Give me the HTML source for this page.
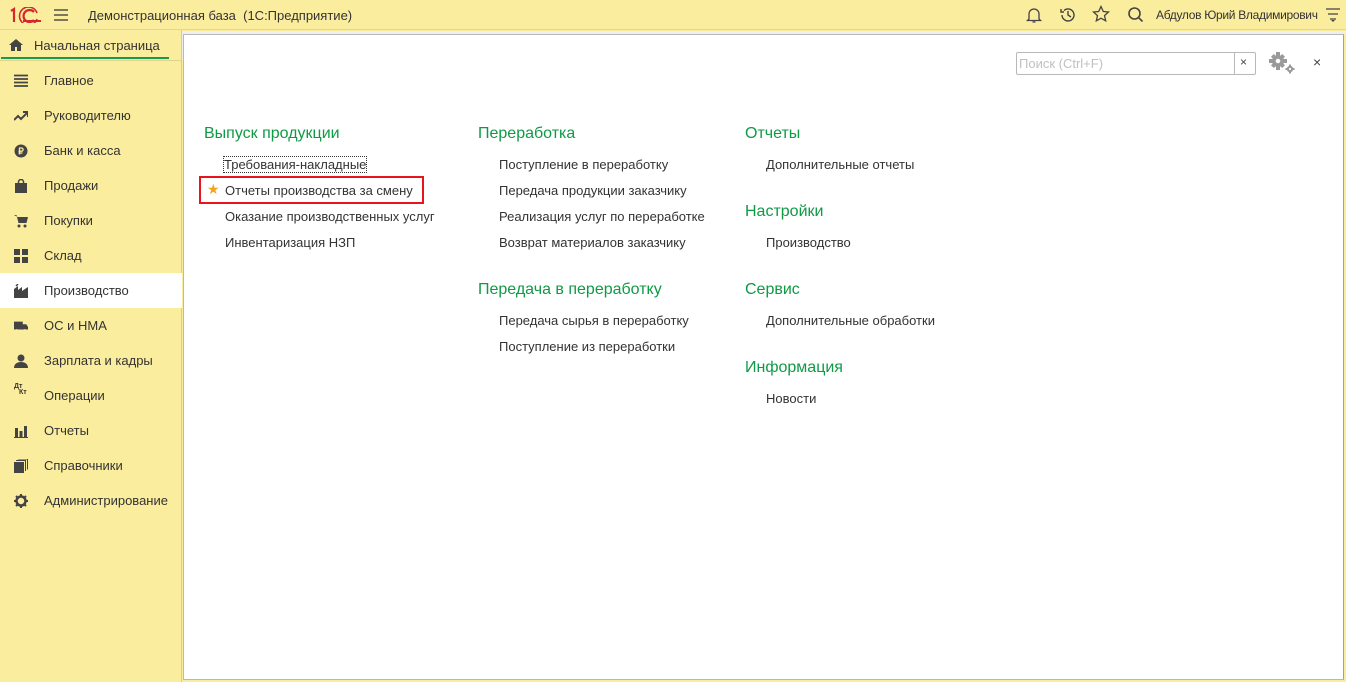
<!DOCTYPE html>
<html><head><meta charset="utf-8"><style>
*{margin:0;padding:0;box-sizing:border-box}
body{width:1346px;height:682px;overflow:hidden;font-family:"Liberation Sans",Arial,sans-serif;font-size:13px;color:#333;background:#fbed9e;position:relative}
.top{position:absolute;left:0;top:0;width:1346px;height:30px;background:#fbed9e;border-bottom:1px solid #e4d68e}
.abs{position:absolute;white-space:nowrap}
.side{position:absolute;left:0;top:30px;width:182px;height:652px;background:#fbed9e;border-right:1px solid #c9c9c9}
.tab{position:absolute;left:0;top:30px;width:172px;height:30px;background:#fbed9e}
.tab .ln{position:absolute;left:1px;right:3px;bottom:1px;height:2px;background:#1a9b4b}
.item{position:absolute;left:0;width:182px;height:35px;line-height:35px;padding-left:44px;font-size:13px}
.item .ic{position:absolute;left:14px;top:11px;width:14px;height:14px}
.main{position:absolute;left:183px;top:34px;width:1161px;height:646px;background:#fff;border:1px solid #b8b8b8;border-right:1px solid #a0a0a0}
.h{position:absolute;color:#0f9a45;font-size:16px;white-space:nowrap}
.l{position:absolute;font-size:13px;white-space:nowrap;color:#333}
</style></head><body>
<div class="top"></div>
<div class="abs" style="left:173px;top:31px;width:10px;height:29px;background:#efefef"></div>
<div class="abs" style="left:183px;top:31px;width:1163px;height:3px;background:#efefef"></div>
<svg class="abs" style="left:10px;top:7px" width="32" height="16"><path d="M1 4l3-2v13" stroke="#d7262c" stroke-width="2.2" fill="none"/><path d="M24 5a6 6 0 1 0 0 8" stroke="#d7262c" stroke-width="2.2" fill="none"/><path d="M27 6a9 9 0 1 0 0 6" stroke="#d7262c" stroke-width="1.6" fill="none"/><path d="M13 14h18" stroke="#d7262c" stroke-width="2"/></svg>
<svg class="abs" style="left:54px;top:9px" width="14" height="12"><path d="M0 1H14M0 6H14M0 11H14" stroke="#333" stroke-width="1.3"/></svg>
<div class="abs" style="left:88px;top:8px;font-size:13px">Демонстрационная база&nbsp; (1С:Предприятие)</div>
<svg class="abs" style="left:1025px;top:6px" width="18" height="18" fill="none" stroke="#444" stroke-width="1.3"><path d="M4 13V8a5 5 0 0 1 10 0v5l1.5 1.5h-13zM7.5 16h3"/></svg>
<svg class="abs" style="left:1059px;top:6px" width="18" height="18" fill="none" stroke="#444" stroke-width="1.4"><path d="M3 9a6 6 0 1 0 2-4.5M2 3v3h3M9 5v4l3 2"/></svg>
<svg class="abs" style="left:1092px;top:5px" width="18" height="18" fill="none" stroke="#444" stroke-width="1.3"><path d="M9 1.5l2.3 5 5.2.5-4 3.6 1.2 5.2L9 13.2 4.3 15.8l1.2-5.2-4-3.6 5.2-.5z"/></svg>
<svg class="abs" style="left:1127px;top:6px" width="18" height="18" fill="none" stroke="#444" stroke-width="1.6"><circle cx="7.5" cy="7.5" r="5.5"/><path d="M11.5 11.5l4 4"/></svg>
<div class="abs" style="left:1156px;top:8px;font-size:12px;letter-spacing:-0.3px">Абдулов Юрий Владимирович</div>
<svg class="abs" style="left:1326px;top:8px" width="14" height="14"><path d="M0 1H14M2 6H12M4 11H10" stroke="#444" stroke-width="1.3"/><path d="M5 12l2 2 2-2" fill="#444"/></svg>
<div class="side"></div>
<div class="tab"><svg class="abs" style="left:9px;top:9px" width="14" height="12"><path d="M7 0L0 6h2v6h4V8h2v4h4V6h2z" fill="#444"/></svg><span class="abs" style="left:34px;top:8px">Начальная страница</span><div class="ln"></div></div>
<div style="position:absolute;left:0;top:60px;width:182px;height:1px;background:#e0d390"></div>
<div class="item" style="top:63px"><svg class="ic" viewBox="0 0 14 14"><path d="M0 1.5H14M0 5H14M0 8.5H14M0 12H14" stroke="#444" stroke-width="1.8"/></svg>Главное</div>
<div class="item" style="top:98px"><svg class="ic" viewBox="0 0 14 14"><path d="M0 11l4-4 3 3 6-6M9 3h5v5" fill="none" stroke="#444" stroke-width="2"/></svg>Руководителю</div>
<div class="item" style="top:133px"><svg class="ic" viewBox="0 0 14 14"><circle cx="7" cy="7" r="6.5" fill="#444"/><path d="M5.5 3.5v7M5.5 4h2a1.6 1.6 0 0 1 0 3.2h-3M4.5 9h4" stroke="#fbed9e" stroke-width="1.3" fill="none"/></svg>Банк и касса</div>
<div class="item" style="top:168px"><svg class="ic" viewBox="0 0 14 14"><path d="M1 4h12v10H1z" fill="#444"/><path d="M4.5 5V3a2.5 2.5 0 0 1 5 0v2" stroke="#444" stroke-width="1.5" fill="none"/></svg>Продажи</div>
<div class="item" style="top:203px"><svg class="ic" viewBox="0 0 14 14"><path d="M0 1h2.5l2 8h8l1.5-6H3.5" fill="#444"/><circle cx="5" cy="12" r="1.5" fill="#444"/><circle cx="11" cy="12" r="1.5" fill="#444"/></svg>Покупки</div>
<div class="item" style="top:238px"><svg class="ic" viewBox="0 0 14 14"><path d="M0 0h6v6H0zM8 0h6v6H8zM0 8h6v6H0zM8 8h6v6H8z" fill="#444"/></svg>Склад</div>
<div class="item" style="top:273px;background:#fff"><svg class="ic" viewBox="0 0 14 14"><path d="M0 14V5l4-3v4l4-3v4l6-4v11z" fill="#444"/><path d="M2 2l2-2" stroke="#444" stroke-width="1.5"/></svg>Производство</div>
<div class="item" style="top:308px"><svg class="ic" viewBox="0 0 16 14"><path d="M0 2h10v9H0zM10 5h4l2 3v3h-6z" fill="#444"/><circle cx="3" cy="12" r="1.5" fill="#fbed9e"/><circle cx="12.5" cy="12" r="1.5" fill="#fbed9e"/></svg>ОС и НМА</div>
<div class="item" style="top:343px"><svg class="ic" viewBox="0 0 14 14"><circle cx="7" cy="4" r="3.5" fill="#444"/><path d="M0 14c0-4 3-6 7-6s7 2 7 6z" fill="#444"/></svg>Зарплата и кадры</div>
<div class="item" style="top:378px"><span style="position:absolute;left:14px;top:-9px;font-size:7px;font-weight:bold">Дт</span><span style="position:absolute;left:19px;top:-3px;font-size:7px;font-weight:bold">Кт</span>Операции</div>
<div class="item" style="top:413px"><svg class="ic" viewBox="0 0 14 14"><path d="M1 4h3v9H1zM5.5 7h3v6h-3zM10 2h3v11h-3zM0 13h14v1H0z" fill="#444"/></svg>Отчеты</div>
<div class="item" style="top:448px"><svg class="ic" viewBox="0 0 14 14"><path d="M0 3h10v11H0z" fill="#444"/><path d="M2 1.5h9.5V12M4 0h9.5v10.5" stroke="#444" fill="none"/></svg>Справочники</div>
<div class="item" style="top:483px"><svg class="ic" viewBox="0 0 14 14"><circle cx="7" cy="7" r="4.5" fill="none" stroke="#444" stroke-width="2.5"/><path d="M7 0v3M7 11v3M0 7h3M11 7h3M2 2l2 2M10 10l2 2M12 2l-2 2M2 12l2-2" stroke="#444" stroke-width="2"/></svg>Администрирование</div>

<div class="main"></div>
<div class="abs" style="left:1016px;top:52px;width:240px;height:23px;border:1px solid #b8b8b8;border-radius:2px;background:#fff"></div>
<div class="abs" style="left:1234px;top:52px;width:1px;height:23px;background:#b8b8b8"></div>
<div class="abs" style="left:1019px;top:56px;color:#c0c0c0;font-size:13px">Поиск (Ctrl+F)</div>
<div class="abs" style="left:1240px;top:55px;font-size:12px;color:#444">×</div>
<svg class="abs" style="left:1268px;top:51px" width="28" height="24"><g fill="#9a9a9a"><circle cx="10" cy="10" r="6"/><path d="M8 1h4v18H8zM1 8h18v4H1z"/><path d="M3 5.8L5.8 3 17 14.2 14.2 17zM14.2 3L17 5.8 5.8 17 3 14.2z"/></g><circle cx="10" cy="10" r="2.3" fill="#fff"/><g fill="#9a9a9a"><circle cx="22" cy="18" r="3.2"/><path d="M21 13.5h2v9h-2zM17.5 17h9v2h-9z"/></g><circle cx="22" cy="18" r="1.1" fill="#fff"/></svg>
<div class="abs" style="left:1313px;top:54px;font-size:14px;color:#444">×</div>

<div class="h" style="left:204px;top:125px">Выпуск продукции</div>
<div class="l" style="left:224px;top:157px;outline:1px dotted #333;outline-offset:0">Требования-накладные</div>
<div class="abs" style="left:199px;top:176px;width:225px;height:28px;border:2px solid #e8141b"></div>
<div class="abs" style="left:207px;top:181px;color:#f5a31a;font-size:14px">★</div>
<div class="l" style="left:225px;top:183px">Отчеты производства за смену</div>
<div class="l" style="left:225px;top:209px">Оказание производственных услуг</div>
<div class="l" style="left:225px;top:235px">Инвентаризация НЗП</div>

<div class="h" style="left:478px;top:125px">Переработка</div>
<div class="l" style="left:499px;top:157px">Поступление в переработку</div>
<div class="l" style="left:499px;top:183px">Передача продукции заказчику</div>
<div class="l" style="left:499px;top:209px">Реализация услуг по переработке</div>
<div class="l" style="left:499px;top:235px">Возврат материалов заказчику</div>
<div class="h" style="left:478px;top:281px">Передача в переработку</div>
<div class="l" style="left:499px;top:313px">Передача сырья в переработку</div>
<div class="l" style="left:499px;top:339px">Поступление из переработки</div>

<div class="h" style="left:745px;top:125px">Отчеты</div>
<div class="l" style="left:766px;top:157px">Дополнительные отчеты</div>
<div class="h" style="left:745px;top:203px">Настройки</div>
<div class="l" style="left:766px;top:235px">Производство</div>
<div class="h" style="left:745px;top:281px">Сервис</div>
<div class="l" style="left:766px;top:313px">Дополнительные обработки</div>
<div class="h" style="left:745px;top:359px">Информация</div>
<div class="l" style="left:766px;top:391px">Новости</div>
</body></html>
